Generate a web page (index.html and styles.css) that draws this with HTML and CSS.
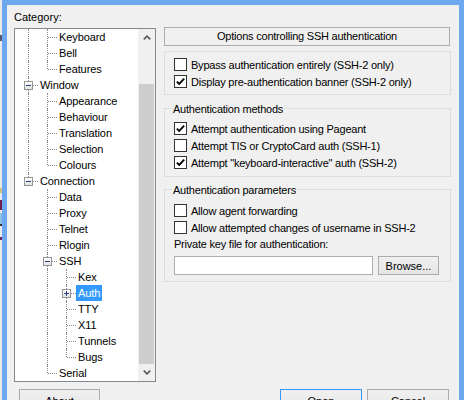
FILE: index.html
```html
<!DOCTYPE html>
<html>
<head>
<meta charset="utf-8">
<link rel="stylesheet" href="styles.css">
</head>
<body>
<div class="screen">
  <div class="desk"></div>
  <div class="frame">
    <div class="client">
      <div class="main">
        <div class="left">
          <div class="cat-label">Category:</div>
          <div class="tree">
            <div class="tree-list">
              <div class="row"><span class="g v"></span><span class="g m"></span><span class="lbl">Keyboard</span></div>
              <div class="row"><span class="g v"></span><span class="g m"></span><span class="lbl">Bell</span></div>
              <div class="row"><span class="g v"></span><span class="g t"></span><span class="lbl">Features</span></div>
              <div class="row"><span class="g m"><span class="box minus"></span></span><span class="lbl">Window</span></div>
              <div class="row"><span class="g v"></span><span class="g m"></span><span class="lbl">Appearance</span></div>
              <div class="row"><span class="g v"></span><span class="g m"></span><span class="lbl">Behaviour</span></div>
              <div class="row"><span class="g v"></span><span class="g m"></span><span class="lbl">Translation</span></div>
              <div class="row"><span class="g v"></span><span class="g m"></span><span class="lbl">Selection</span></div>
              <div class="row"><span class="g v"></span><span class="g t"></span><span class="lbl">Colours</span></div>
              <div class="row"><span class="g t"><span class="box minus"></span></span><span class="lbl">Connection</span></div>
              <div class="row"><span class="g"></span><span class="g m"></span><span class="lbl">Data</span></div>
              <div class="row"><span class="g"></span><span class="g m"></span><span class="lbl">Proxy</span></div>
              <div class="row"><span class="g"></span><span class="g m"></span><span class="lbl">Telnet</span></div>
              <div class="row"><span class="g"></span><span class="g m"></span><span class="lbl">Rlogin</span></div>
              <div class="row"><span class="g"></span><span class="g m"><span class="box minus"></span></span><span class="lbl">SSH</span></div>
              <div class="row"><span class="g"></span><span class="g v"></span><span class="g m"></span><span class="lbl">Kex</span></div>
              <div class="row"><span class="g"></span><span class="g v"></span><span class="g m"><span class="box plus"></span></span><span class="lbl sel">Auth</span></div>
              <div class="row"><span class="g"></span><span class="g v"></span><span class="g m"></span><span class="lbl">TTY</span></div>
              <div class="row"><span class="g"></span><span class="g v"></span><span class="g m"></span><span class="lbl">X11</span></div>
              <div class="row"><span class="g"></span><span class="g v"></span><span class="g m"></span><span class="lbl">Tunnels</span></div>
              <div class="row"><span class="g"></span><span class="g v"></span><span class="g t"></span><span class="lbl">Bugs</span></div>
              <div class="row"><span class="g"></span><span class="g t"></span><span class="lbl">Serial</span></div>
            </div>
            <div class="vscroll">
              <div class="sb-btn"><svg width="8" height="5" viewBox="0 0 8 5"><polyline points="0.8,4.4 4,1.2 7.2,4.4" fill="none" stroke="#606060" stroke-width="1.8"/></svg></div>
              <div class="sb-track"><div class="sb-thumb"></div></div>
              <div class="sb-btn"><svg width="8" height="5" viewBox="0 0 8 5"><polyline points="0.8,0.6 4,3.8 7.2,0.6" fill="none" stroke="#606060" stroke-width="1.8"/></svg></div>
            </div>
          </div>
        </div>
        <div class="right">
          <div class="title-box">Options controlling SSH authentication</div>
          <div class="group g1">
            <div class="check"><span class="cb"></span><span>Bypass authentication entirely (SSH-2 only)</span></div>
            <div class="check"><span class="cb on"><svg width="11" height="11" viewBox="0 0 11 11"><polyline points="1.8,5.6 4.2,8 9.2,2.6" fill="none" stroke="#000" stroke-width="1.9"/></svg></span><span>Display pre-authentication banner (SSH-2 only)</span></div>
          </div>
          <div class="group g2">
            <span class="gtitle">Authentication methods</span>
            <div class="check"><span class="cb on"><svg width="11" height="11" viewBox="0 0 11 11"><polyline points="1.8,5.6 4.2,8 9.2,2.6" fill="none" stroke="#000" stroke-width="1.9"/></svg></span><span>Attempt authentication using Pageant</span></div>
            <div class="check"><span class="cb"></span><span>Attempt TIS or CryptoCard auth (SSH-1)</span></div>
            <div class="check"><span class="cb on"><svg width="11" height="11" viewBox="0 0 11 11"><polyline points="1.8,5.6 4.2,8 9.2,2.6" fill="none" stroke="#000" stroke-width="1.9"/></svg></span><span>Attempt "keyboard-interactive" auth (SSH-2)</span></div>
          </div>
          <div class="group g3">
            <span class="gtitle">Authentication parameters</span>
            <div class="check"><span class="cb"></span><span>Allow agent forwarding</span></div>
            <div class="check"><span class="cb"></span><span>Allow attempted changes of username in SSH-2</span></div>
            <div class="field-label">Private key file for authentication:</div>
            <div class="file-row">
              <div class="edit"></div>
              <button class="btn browse">Browse...</button>
            </div>
          </div>
        </div>
      </div>
      <div class="buttons">
        <button class="btn about">About</button>
        <div class="spacer"></div>
        <button class="btn open">Open</button>
        <button class="btn cancel">Cancel</button>
      </div>
    </div>
  </div>
</div>
</body>
</html>
```
FILE: styles.css
```css
* { box-sizing: border-box; }
html, body { margin: 0; padding: 0; }
body {
  width: 464px;
  height: 400px;
  overflow: hidden;
  font-family: "Liberation Sans", Arial, sans-serif;
  font-size: 11px;
  color: #000;
  background: #e9e9e9;
}
.screen { display: flex; height: 400px; }
.desk {
  width: 2px;
  flex: none;
  background: linear-gradient(to bottom,
    #e9e9e9 0, #e9e9e9 35px, #505870 35px, #505870 41px, #e9e9e9 41px,
    #e9e9e9 188px, #c9c27a 188px, #c9c27a 193px, #e9e9e9 193px,
    #e9e9e9 200px, #6e1d4e 200px, #6e1d4e 210px, #e9e9e9 210px,
    #e9e9e9 213px, #8cc0e0 213px, #8cc0e0 224px, #303040 224px, #303040 226px, #e9e9e9 226px,
    #e9e9e9 237px, #6a2a6a 237px, #6a2a6a 240px, #e9e9e9 240px);
}
.frame {
  flex: 1;
  display: flex;
  background: #6ca7f0;
  padding: 5px 5px 0 5px;
}
.client {
  flex: 1;
  display: flex;
  flex-direction: column;
  background: #f0f0f0;
}
.main { display: flex; padding-left: 7px; }
.left {
  width: 142px;
  flex: none;
  padding-top: 6px;
  display: flex;
  flex-direction: column;
}
.cat-label { height: 13px; line-height: 13px; }
.tree {
  margin-top: 4px;
  height: 354px;
  border: 1px solid #828790;
  background: #fff;
  display: flex;
}
.tree-list { flex: 1; overflow: hidden; letter-spacing: -0.1px; }
.row {
  display: flex;
  height: 16px;
  padding-left: 4px;
}
.g {
  position: relative;
  width: 19px;
  height: 16px;
  flex: none;
}
.g.v::before, .g.m::before, .g.t::before {
  content: "";
  position: absolute;
  left: 9px;
  top: 0;
  height: 16px;
  border-left: 1px dotted #8a8a8a;
}
.g.t::before { height: 8px; }
.g.m::after, .g.t::after {
  content: "";
  position: absolute;
  left: 10px;
  right: 0;
  top: 8px;
  border-top: 1px dotted #8a8a8a;
}
.box {
  position: absolute;
  left: 5px;
  top: 4px;
  width: 9px;
  height: 9px;
  border: 1px solid #959595;
  background: linear-gradient(#ffffff, #e2e2e2);
  z-index: 1;
}
.box::before {
  content: "";
  position: absolute;
  left: 1px;
  top: 3px;
  width: 5px;
  height: 1px;
  background: #23407a;
}
.box.plus::after {
  content: "";
  position: absolute;
  left: 3px;
  top: 1px;
  width: 1px;
  height: 5px;
  background: #23407a;
}
.lbl {
  padding: 0 2px;
  line-height: 16px;
  white-space: nowrap;
}
.lbl.sel { background: #3399ff; color: #fff; }
.vscroll {
  width: 17px;
  flex: none;
  display: flex;
  flex-direction: column;
  background: #f0f0f0;
}
.sb-btn {
  height: 17px;
  flex: none;
  display: flex;
  align-items: center;
  justify-content: center;
}
.sb-btn svg { display: block; }
.sb-track {
  flex: 1;
  display: flex;
  padding: 38px 1px 0 1px;
}
.sb-thumb { flex: 1; background: #cdcdcd; }

.right {
  width: 287px;
  flex: none;
  margin-left: 8px;
  padding-top: 22px;
  display: flex;
  flex-direction: column;
  letter-spacing: -0.22px;
}
.title-box {
  width: 286px;
  height: 19px;
  border: 1px solid #adadad;
  line-height: 17px;
  text-align: center;
}
.group {
  position: relative;
  border: 1px solid #dcdcdc;
  padding-left: 9px;
}
.g1 { margin-top: 5px; height: 44px; padding-top: 4px; }
.g2 { margin-top: 13px; height: 69px; padding-top: 11px; }
.g3 { margin-top: 12px; height: 93px; padding-top: 12px; }
.gtitle {
  position: absolute;
  top: -6px;
  left: 7px;
  padding: 0 1px;
  line-height: 13px;
  background: #f0f0f0;
  white-space: nowrap;
}
.check {
  display: flex;
  align-items: center;
  height: 17px;
  white-space: nowrap;
}
.cb {
  width: 13px;
  height: 13px;
  flex: none;
  border: 1px solid #333;
  background: #fff;
  margin-right: 4px;
}
.cb svg { display: block; }
.field-label { height: 17px; line-height: 17px; }
.file-row { display: flex; margin-top: 3px; }
.edit {
  width: 199px;
  height: 19px;
  border: 1px solid #abadb3;
  background: #fff;
}
.btn {
  font: inherit;
  color: #000;
  padding: 0;
  margin: 0;
  border: 1px solid #acacac;
  background: linear-gradient(#f0f0f0, #e5e5e5);
  height: 23px;
  flex: none;
}
.browse { width: 61px; height: 19px; margin-left: 5px; }
.buttons {
  display: flex;
  margin-top: 7px;
  padding: 0 10px 0 12px;
}
.spacer { flex: 1; }
.about { width: 81px; }
.open { width: 82px; border-color: #3399ff; }
.cancel { width: 82px; margin-left: 5px; }
```
